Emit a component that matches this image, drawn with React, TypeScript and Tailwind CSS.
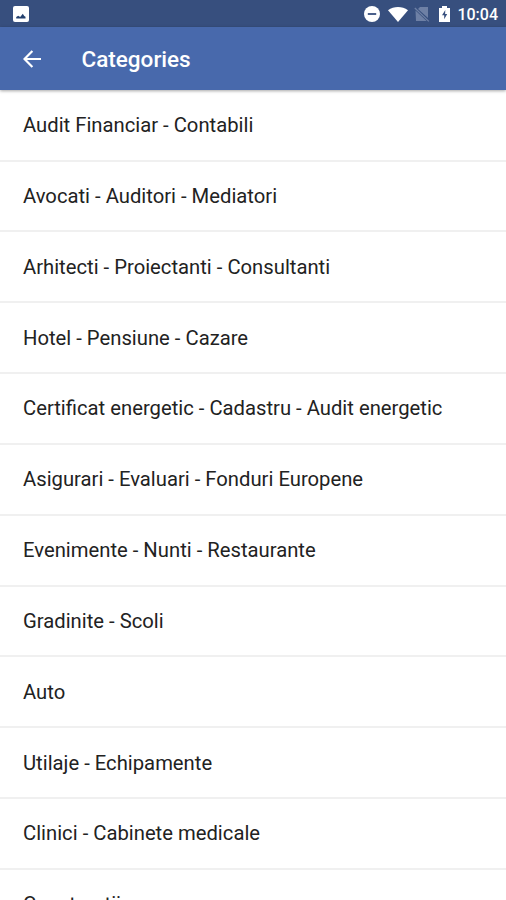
const categories = [
  'Audit Financiar - Contabili',
  'Avocati - Auditori - Mediatori',
  'Arhitecti - Proiectanti - Consultanti',
  'Hotel - Pensiune - Cazare',
  'Certificat energetic - Cadastru - Audit energetic',
  'Asigurari - Evaluari - Fonduri Europene',
  'Evenimente - Nunti - Restaurante',
  'Gradinite - Scoli',
  'Auto',
  'Utilaje - Echipamente',
  'Clinici - Cabinete medicale',
  'Constructii',
];

function StatusBar() {
  return (
    <div className="flex h-[27px] shrink-0 items-center bg-[#374f7e] pt-px pr-2 pl-[13px] text-white">
      <svg className="h-4 w-4" viewBox="0 0 16 16" fill="none">
        <rect width="16" height="16" rx="2" fill="#fff" />
        <path d="M3.2 12.5V11l2-1.2 2 1.2 2.6-3.2 1.4 2.2 1.3.8v1.7z" fill="#24416f" />
      </svg>
      <div className="ml-auto flex items-center">
        <svg className="h-4 w-4" viewBox="0 0 16 16">
          <circle cx="8" cy="8" r="8" fill="#fff" />
          <path d="M3.8 8h8.4" stroke="#374f7e" strokeWidth="1.8" />
        </svg>
        <svg className="ml-[8px] h-[15px] w-5" viewBox="0 0 20 15">
          <path d="M0 3.2C6-1 14-1 20 3.2L10 15z" fill="#fff" />
        </svg>
        <svg className="ml-1.5 h-4 w-4" viewBox="0 0 16 16">
          <path d="M6 1h8v11L4 2.9zM1.5 4.5L12.6 15H2z" fill="#6e80a5" />
          <path d="M.8 2L14.8 15.4" stroke="#6e80a5" strokeWidth="1.3" />
        </svg>
        <svg className="ml-[9px] h-4 w-[11px]" viewBox="0 0 11 16">
          <path d="M3 0h5v2h3v14H0V2h3z" fill="#fff" />
          <path d="M6.3 4L3 9.3h2.2v4L8.2 8H6.1z" fill="#374f7e" />
        </svg>
        <span className="ml-[7px] pt-0.5 text-[16px] leading-none font-medium">10:04</span>
      </div>
    </div>
  );
}

function AppBar() {
  return (
    <header className="z-10 flex h-[63px] shrink-0 items-center bg-[#4869ac] pl-[23px] text-white shadow-[0_1px_3px_rgba(0,0,0,0.35)]">
      <svg className="h-[18px] w-[18px]" viewBox="0 0 18 18" fill="none" stroke="#fff" strokeWidth="2.2">
        <path d="M18 9H1.6M9.4.9L1.5 9l7.9 8.1" />
      </svg>
      <h1 className="ml-[40.5px] pt-0.5 text-[22.5px] leading-none font-medium">Categories</h1>
    </header>
  );
}

export default function App() {
  return (
    <div className="flex h-[900px] w-[506px] flex-col overflow-hidden bg-white font-['Roboto',sans-serif]">
      <StatusBar />
      <AppBar />
      <ul className="shrink-0 pt-[0.7px]">
        {categories.map((name) => (
          <li
            key={name}
            className="flex h-[70.85px] items-center border-b-2 border-[#f0f0f0] pl-[23px] text-[20.24px] leading-none whitespace-nowrap text-[#222222]"
          >
            {name}
          </li>
        ))}
      </ul>
    </div>
  );
}
